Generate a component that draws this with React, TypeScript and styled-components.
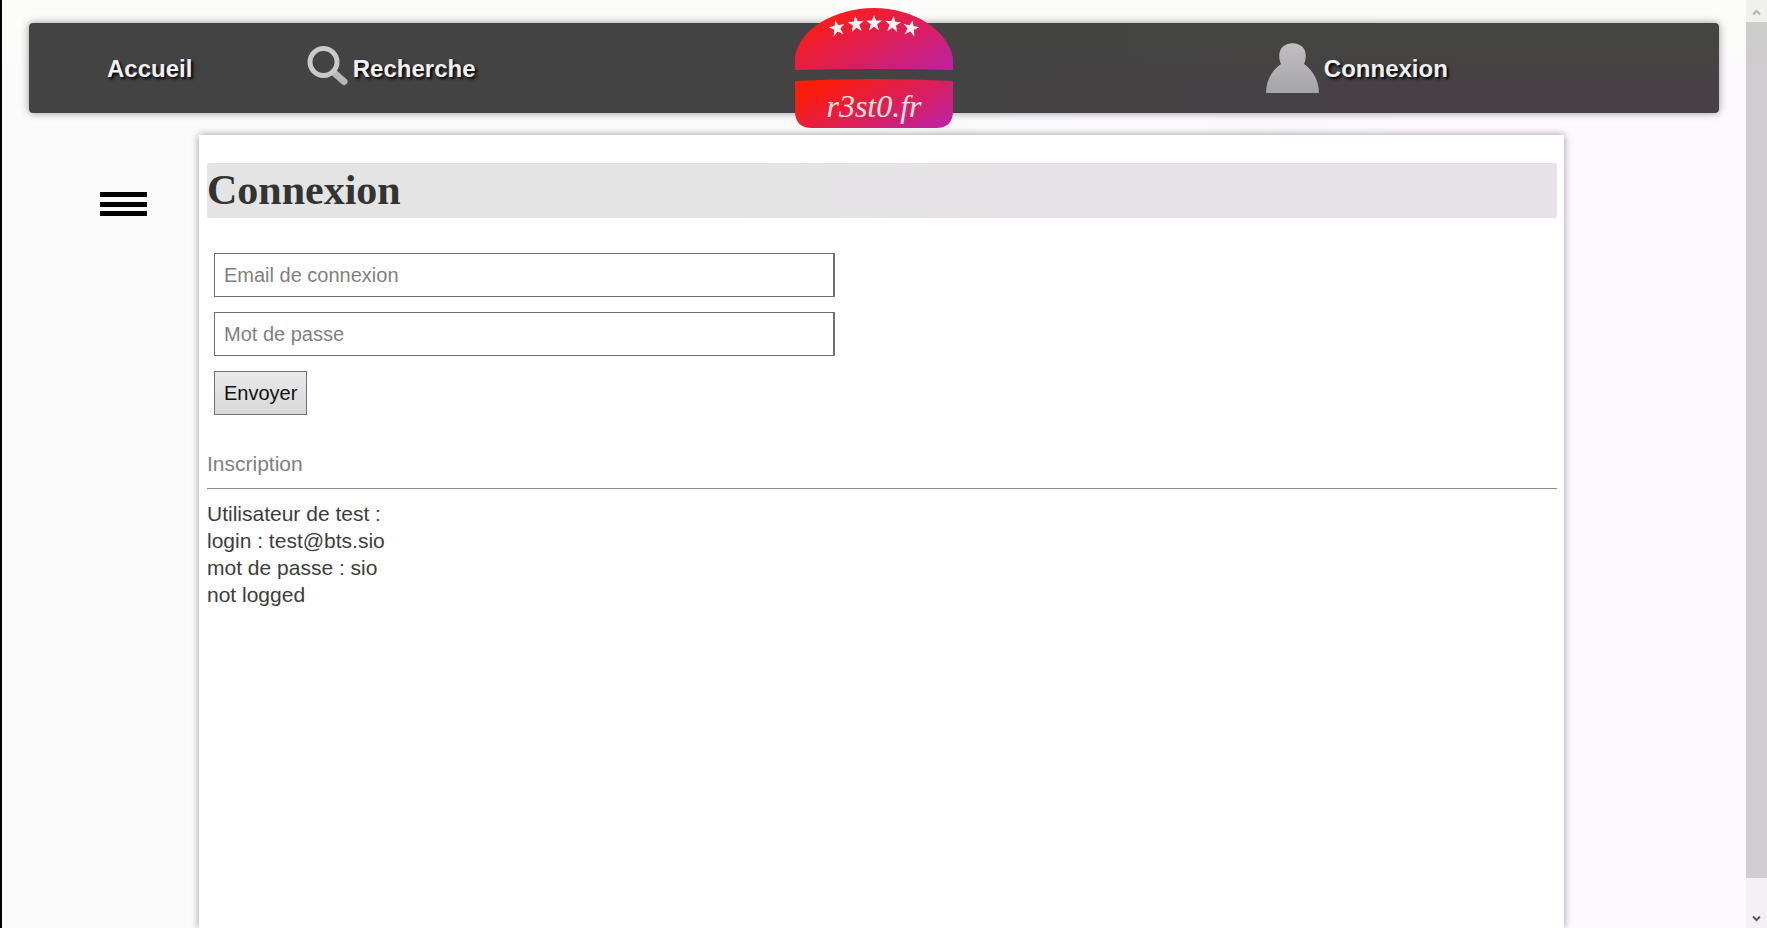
import React from "react";
import styled, { createGlobalStyle } from "styled-components";

const sans = `"Liberation Sans", Arial, sans-serif`;
const serif = `"Liberation Serif", "Times New Roman", serif`;

const GlobalStyle = createGlobalStyle`
  * { box-sizing: border-box; }
  body { margin: 0; font-family: ${sans}; font-size: 21px; line-height: 27px; color: #3c3c3c; }
`;

const Shell = styled.div`
  display: flex;
  min-height: 100vh;
  border-left: 2px solid #000;
`;

const Page = styled.div`
  flex: 1;
  min-width: 0;
  display: flex;
  flex-direction: column;
  gap: 22px;
  padding-top: 23px;
  background:
    linear-gradient(to bottom, #fcfdfb 0, #fcfdfb 40px, transparent 70px),
    linear-gradient(to right, #fbfbfb 0, #fbfbfb 50%, #fdf9ff 80%);
`;

const NavBar = styled.nav`
  position: relative;
  z-index: 1;
  height: 90px;
  margin: 0 27px;
  border-radius: 4px;
  background:
    linear-gradient(to right, #434343 50%, transparent 80%),
    linear-gradient(to bottom, #444540 20%, #474145 60%);
  box-shadow: 0 0 8px rgba(0, 0, 0, 0.4);
`;

const NavList = styled.ul`
  display: grid;
  grid-template-columns: repeat(7, 1fr);
  grid-template-rows: 100%;
  align-items: center;
  height: 100%;
  margin: 0;
  padding: 0;
  list-style: none;
`;

const NavItem = styled.li<{ $column: number }>`
  grid-column: ${(p) => p.$column};
  display: flex;
  justify-content: center;
`;

const NavLink = styled.a`
  display: flex;
  align-items: center;
  gap: 5px;
  color: #f0f0f0;
  font-size: 24px;
  font-weight: bold;
  text-decoration: none;
  text-shadow: 2px 2px 3px #000;
  svg { flex: none; }
`;

const Columns = styled.div`
  flex: 1;
  display: flex;
`;

const Side = styled.aside`
  width: 197px;
  flex: none;
  padding: 57px 0 0 98px;
`;

const MenuButton = styled.button`
  display: flex;
  flex-direction: column;
  justify-content: space-between;
  width: 47px;
  height: 24px;
  padding: 0;
  border: 0;
  background: none;
`;

const MenuLine = styled.span`
  width: 100%;
  height: 5px;
  background: #000;
`;

const Card = styled.main`
  flex: 1;
  min-width: 0;
  margin-right: 182px;
  padding: 28px 7px 28px 8px;
  background: #fff;
  box-shadow: 0 0 8px rgba(0, 0, 0, 0.4);
`;

const Title = styled.h1`
  margin: 0;
  height: 55px;
  border-radius: 2px;
  background: linear-gradient(to right, #e4e4e4 40%, #e7e2e7 60%);
  color: #333;
  font-family: ${serif};
  font-size: 42px;
  line-height: 54px;
`;

const LoginForm = styled.form`
  display: flex;
  flex-direction: column;
  align-items: flex-start;
  gap: 15px;
  padding: 35px 7px;
`;

const Field = styled.input`
  width: 46.5%;
  height: 44px;
  padding: 0 9px;
  border: 1px solid #707070;
  border-right-width: 2px;
  background: #fff;
  color: #222;
  font-family: ${sans};
  font-size: 20px;
  &::placeholder { color: #7f7f7f; opacity: 1; }
`;

const Submit = styled.button`
  height: 44px;
  padding: 0 9px;
  border: 1px solid #707070;
  background: linear-gradient(to bottom, #e9e9e9, #d8d8d8);
  color: #111;
  font-family: ${sans};
  font-size: 20px;
`;

const SignupLink = styled.a`
  display: block;
  color: #808080;
  text-decoration: none;
`;

const Rule = styled.hr`
  height: 1px;
  margin: 11px 0;
  border: 0;
  background: #8c8c8c;
`;

const Notes = styled.p`
  margin: 0;
`;

const ScrollTrack = styled.div`
  flex: none;
  display: flex;
  flex-direction: column;
  width: 21px;
  background: #f2eef3;
`;

const ScrollArrow = styled.div<{ $tall?: boolean }>`
  display: flex;
  justify-content: center;
  align-items: flex-end;
  height: ${(p) => (p.$tall ? 50 : 22)}px;
  padding-bottom: 6px;
  background: ${(p) => (p.$tall ? "#f3eff4" : "#f0f1ef")};
`;

const ScrollThumb = styled.div`
  flex: 1;
  background: linear-gradient(to bottom, #cdcdcb 0, #d0ccd0 50px);
`;

function SearchIcon() {
  return (
    <svg width="41" height="44" viewBox="0 0 41 44" aria-hidden="true">
      <path d="M28 27.500 L37 35.500" stroke="#b8b8b8" strokeWidth="7" strokeLinecap="round" />
      <circle cx="16.500" cy="16" r="13.500" fill="none" stroke="#c9c9c9" strokeWidth="5" />
    </svg>
  );
}

function UserIcon() {
  return (
    <svg width="53" height="52" viewBox="0 0 53 52" aria-hidden="true">
      <defs>
        <linearGradient id="user" x1="0" y1="0" x2="0" y2="1">
          <stop offset="0" stopColor="#c1bfc0" />
          <stop offset="1" stopColor="#a5a4a7" />
        </linearGradient>
      </defs>
      <path
        d="M0 51 C0 39 6 28 15 22 C12 15 13 8 17 4.500 C22 0 31 0 36 4.500 C40 8 41 15 38 22 C47 28 53 39 53 51 Z"
        fill="url(#user)"
      />
    </svg>
  );
}

const STAR = "M0 -8 L2 -2.500 L8 -2.500 L3.200 1.200 L5 7.500 L0 3.700 L-5 7.500 L-3.200 1.200 L-8 -2.500 L-2 -2.500 Z";

const stars = [
  { x: 43, y: 20, turn: -12 },
  { x: 62, y: 16, turn: -6 },
  { x: 80, y: 15, turn: 0 },
  { x: 99, y: 16, turn: 6 },
  { x: 117, y: 20, turn: 12 },
];

function Logo() {
  return (
    <svg width="160" height="120" viewBox="0 0 160 120" role="img" aria-label="r3st0.fr">
      <defs>
        <linearGradient id="top" x1="0" y1="0.200" x2="1" y2="0.900">
          <stop offset="0.100" stopColor="#f91d18" />
          <stop offset="1" stopColor="#c0209d" />
        </linearGradient>
        <linearGradient id="bottom" x1="0" y1="0.200" x2="1" y2="0.800">
          <stop offset="0.100" stopColor="#fb1c0b" />
          <stop offset="1" stopColor="#c0229b" />
        </linearGradient>
      </defs>
      <path d="M1 62 V50 C4 22 40 0 80 0 C120 0 154 22 159 50 V62 Q80 60 1 62 Z" fill="url(#top)" />
      <path d="M1 73 Q80 69 159 73 V103 Q159 120 142 120 H18 Q1 120 1 103 Z" fill="url(#bottom)" />
      {stars.map((s) => (
        <path key={s.x} d={STAR} fill="#fff3f3" transform={`translate(${s.x} ${s.y}) rotate(${s.turn})`} />
      ))}
      <text
        x="80"
        y="109"
        textAnchor="middle"
        fill="#ffe3dc"
        fontFamily={serif}
        fontStyle="italic"
        fontWeight="400"
        fontSize="32"
        style={{ textShadow: "none" }}
      >
        r3st0.fr
      </text>
    </svg>
  );
}

function Chevron({ up }: { up?: boolean }) {
  return (
    <svg width="9" height="7" viewBox="0 0 9 7" aria-hidden="true">
      <path d={up ? "M1 5.500 L4.500 2 L8 5.500" : "M1 1.500 L4.500 5 L8 1.500"} fill="none" stroke={up ? "#b4b4b4" : "#5c545c"} strokeWidth="2" />
    </svg>
  );
}

export default function App() {
  return (
    <>
      <GlobalStyle />
      <Shell>
        <Page>
          <NavBar>
            <NavList>
              <NavItem $column={1}><NavLink href="#accueil">Accueil</NavLink></NavItem>
              <NavItem $column={2}><NavLink href="#recherche"><SearchIcon />Recherche</NavLink></NavItem>
              <NavItem $column={4}><NavLink href="#accueil"><Logo /></NavLink></NavItem>
              <NavItem $column={6}><NavLink href="#connexion"><UserIcon />Connexion</NavLink></NavItem>
            </NavList>
          </NavBar>
          <Columns>
            <Side>
              <MenuButton type="button" aria-label="Menu">
                <MenuLine /><MenuLine /><MenuLine />
              </MenuButton>
            </Side>
            <Card>
              <Title>Connexion</Title>
              <LoginForm onSubmit={(e) => e.preventDefault()}>
                <Field type="email" aria-label="Email de connexion" placeholder="Email de connexion" />
                <Field type="password" aria-label="Mot de passe" placeholder="Mot de passe" />
                <Submit type="submit">Envoyer</Submit>
              </LoginForm>
              <SignupLink href="#inscription">Inscription</SignupLink>
              <Rule />
              <Notes>
                Utilisateur de test :<br />
                login : test@bts.sio<br />
                mot de passe : sio<br />
                not logged
              </Notes>
            </Card>
          </Columns>
        </Page>
        <ScrollTrack aria-hidden="true">
          <ScrollArrow><Chevron up /></ScrollArrow>
          <ScrollThumb />
          <ScrollArrow $tall><Chevron /></ScrollArrow>
        </ScrollTrack>
      </Shell>
    </>
  );
}
